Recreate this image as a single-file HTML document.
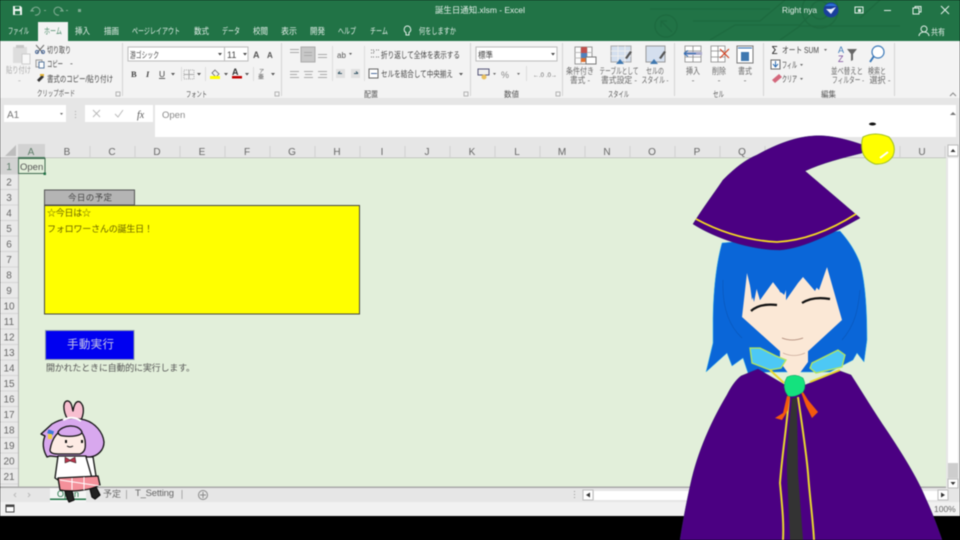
<!DOCTYPE html>
<html lang="ja">
<head>
<meta charset="utf-8">
<title>誕生日通知.xlsm - Excel</title>
<style>
html,body{margin:0;padding:0;background:#000;width:960px;height:540px;overflow:hidden}
svg{display:block;position:absolute;left:0;top:0;filter:blur(.4px)}
text{font-family:"Liberation Sans","Noto Sans CJK JP",sans-serif;fill:#444;font-size:8.5px}
.w{fill:#e4efe9}
.r{fill:#555;font-size:8px}
.c{fill:#666;font-size:10px;text-anchor:middle;font-family:"Liberation Sans",sans-serif}
.n{fill:#666;font-size:10px;text-anchor:middle;font-family:"Liberation Sans",sans-serif}
.g{fill:#666;font-size:8.5px;text-anchor:middle}
</style>
</head>
<body>
<svg width="960" height="540" viewBox="0 0 960 540" xmlns="http://www.w3.org/2000/svg">
<rect width="960" height="540" fill="#000"/>
<!-- title bar -->
<rect width="960" height="41" fill="#217346"/>
<g fill="none" stroke="#1d6a3f" stroke-width="1.300">
<path d="M650 9H770M780 9H800"/>
<circle cx="666" cy="26" r="11"/><path d="M672 32L661 21M661 27V21H667"/>
<path d="M693 21H760L785 0M710 40L735 25H800L815 10"/>
<circle cx="820" cy="10" r="18"/><circle cx="820" cy="10" r="9"/>
<path d="M780 40L800 26H900M880 0L860 18"/>
</g>
<path d="M13 6H20.500L22 7.500V15H13Z" fill="#f0f5f1"/><rect x="15" y="6.500" width="4.500" height="2.500" fill="#217346"/><rect x="15" y="11" width="5" height="3.500" fill="#217346"/>
<g fill="none" stroke="#7eab91" stroke-width="1.100"><path d="M33 8l-2 3h3M32 11a4 4 0 1 1 3 4"/><path d="M61 8l2 3h-3M62 11a4 4 0 1 0-3 4"/></g>
<g fill="#7eab91"><rect x="44" y="10" width="2" height="1"/><rect x="66" y="10" width="2" height="1"/><rect x="78" y="9" width="3" height="3"/></g>
<text class="w" x="435" y="13" textLength="90" lengthAdjust="spacingAndGlyphs">誕生日通知.xlsm  -  Excel</text>
<text class="w" x="782" y="13" textLength="35" lengthAdjust="spacingAndGlyphs">Right nya</text>
<circle cx="831" cy="10" r="7.500" fill="#1a3f9c"/><path d="M826 9l5 5 5-7-5 2z" fill="#e8f0ff"/><path d="M825 6a7 5 0 0 1 12 0z" fill="#2a72d8"/>
<rect x="855" y="7" width="8" height="6" fill="none" stroke="#e4efe9"/><rect x="858" y="9" width="3" height="3" fill="#e4efe9"/>
<rect x="884" y="10" width="7" height="1" fill="#e4efe9"/>
<rect x="913" y="8" width="6" height="6" fill="none" stroke="#e4efe9"/><path d="M915 8V6.500H921V12H919" fill="none" stroke="#e4efe9"/>
<path d="M941 6l8 8M949 6l-8 8" stroke="#e4efe9"/>
<text class="w" x="8" y="34" textLength="21" lengthAdjust="spacingAndGlyphs">ファイル</text>
<path d="M38 41V22H68V41z" fill="#f3f3f3"/>
<text x="44" y="34" style="fill:#4a8a68" textLength="18" lengthAdjust="spacingAndGlyphs">ホーム</text>
<text class="w" x="75" y="34" textLength="15" lengthAdjust="spacingAndGlyphs">挿入</text>
<text class="w" x="104" y="34" textLength="15" lengthAdjust="spacingAndGlyphs">描画</text>
<text class="w" x="132" y="34" textLength="48" lengthAdjust="spacingAndGlyphs">ページレイアウト</text>
<text class="w" x="194" y="34" textLength="15" lengthAdjust="spacingAndGlyphs">数式</text>
<text class="w" x="222" y="34" textLength="18" lengthAdjust="spacingAndGlyphs">データ</text>
<text class="w" x="253" y="34" textLength="15" lengthAdjust="spacingAndGlyphs">校閲</text>
<text class="w" x="281" y="34" textLength="16" lengthAdjust="spacingAndGlyphs">表示</text>
<text class="w" x="310" y="34" textLength="15" lengthAdjust="spacingAndGlyphs">開発</text>
<text class="w" x="338" y="34" textLength="18" lengthAdjust="spacingAndGlyphs">ヘルプ</text>
<text class="w" x="370" y="34" textLength="18" lengthAdjust="spacingAndGlyphs">チーム</text>
<path d="M407 26a3.500 3.500 0 0 1 2 6.500V35h-3v-2.500a3.500 3.500 0 0 1 1-6.500z" fill="none" stroke="#e4efe9"/>
<text class="w" x="419" y="34" textLength="37" lengthAdjust="spacingAndGlyphs">何をしますか</text>
<circle cx="924" cy="29" r="3" fill="none" stroke="#e4efe9"/><path d="M919 36a5 4 0 0 1 10 0" fill="none" stroke="#e4efe9"/>
<text class="w" x="931" y="35" textLength="14" lengthAdjust="spacingAndGlyphs">共有</text>

<!-- ribbon -->
<rect y="41" width="960" height="57" fill="#f3f3f3"/>
<rect y="98" width="960" height="46" fill="#e6e6e6"/>
<g fill="#d4d4d4"><rect x="122" y="43" width="1" height="53"/><rect x="281" y="43" width="1" height="53"/><rect x="470" y="43" width="1" height="53"/><rect x="562" y="43" width="1" height="53"/><rect x="674" y="43" width="1" height="53"/><rect x="763" y="43" width="1" height="53"/><rect x="894" y="43" width="1" height="53"/></g>
<!-- clipboard -->
<rect x="13" y="47" width="14" height="16" fill="#ddd"/><rect x="16" y="45" width="8" height="3" fill="#c8c8c8"/><rect x="22" y="54" width="8" height="10" fill="#f8f8f8" stroke="#ccc"/>
<text x="6" y="73" style="fill:#aaa" textLength="25" lengthAdjust="spacingAndGlyphs">貼り付け</text>
<text x="18" y="83" style="fill:#aaa">-</text>
<path d="M36 45l7 8M44 45l-7 8" stroke="#6f6f6f" fill="none"/><circle cx="37" cy="52" r="1.500" fill="none" stroke="#4a6a9a"/><circle cx="43" cy="52" r="1.500" fill="none" stroke="#4a6a9a"/>
<text x="47" y="53" textLength="24" lengthAdjust="spacingAndGlyphs">切り取り</text>
<rect x="36" y="60" width="6" height="7" fill="#eee" stroke="#999"/><rect x="39" y="62" width="5" height="6" fill="#fff" stroke="#5a7aa0"/>
<text x="47" y="67" textLength="16" lengthAdjust="spacingAndGlyphs">コピー</text><text x="70" y="66">-</text>
<path d="M37 80l5-5 2 2-5 5z" fill="#333"/><rect x="40" y="74" width="4" height="2" fill="#e0b030"/>
<text x="47" y="82" textLength="66" lengthAdjust="spacingAndGlyphs">書式のコピー/貼り付け</text>
<text x="37" y="96" class="r" textLength="38" lengthAdjust="spacingAndGlyphs">クリップボード</text>
<rect x="116" y="92" width="4" height="4" fill="none" stroke="#999" stroke-width=".7"/>
<!-- font -->
<rect x="128" y="47" width="120" height="14" fill="#fff" stroke="#bbb"/><rect x="224" y="47" width="1" height="14" fill="#bbb"/>
<text x="130" y="58" textLength="29" lengthAdjust="spacingAndGlyphs">游ゴシック</text>
<path d="M218 53h4l-2 2.500z M243 53h4l-2 2.500z" fill="#444"/>
<text x="227" y="58" style="font-size:9px">11</text>
<text x="253" y="58" style="font-size:9px;font-weight:bold;fill:#555">A</text><text x="267" y="58" style="font-size:8px;font-weight:bold;fill:#555">A</text>
<text x="131" y="77" style="font-size:8.500px;font-weight:bold;font-family:'Liberation Serif',serif">B</text>
<text x="146" y="77" style="font-size:8.500px;font-style:italic;font-family:'Liberation Serif',serif;font-weight:bold">I</text>
<text x="159" y="77" style="font-size:8.500px;text-decoration:underline">U</text><path d="M171 73h4l-2 2.500z M197 73h4l-2 2.500z M224 73h4l-2 2.500z M245 73h4l-2 2.500z M271 73h4l-2 2.500z" fill="#555"/>
<rect x="181" y="67" width="1" height="14" fill="#ddd"/><rect x="205" y="67" width="1" height="14" fill="#ddd"/><rect x="253" y="67" width="1" height="14" fill="#ddd"/>
<rect x="184" y="70" width="10" height="9" fill="none" stroke="#aaa" stroke-dasharray="1 1"/><path d="M189 70v9M184 74.500h10" stroke="#aaa"/>
<path d="M215 70l4 4-3 3-4-4z" fill="#f0f0f0" stroke="#666" stroke-width=".8"/><rect x="210" y="76" width="10" height="3" fill="#ffff00"/>
<text x="232" y="75" style="font-size:9px;font-weight:bold;fill:#333">A</text><rect x="232" y="76" width="10" height="2.500" fill="#c00000"/>
<text x="259" y="73" style="font-size:5px">ア</text><text x="258" y="79" style="font-size:6px">亜</text>
<text x="186" y="97" class="r" textLength="21" lengthAdjust="spacingAndGlyphs">フォント</text>
<rect x="275" y="92" width="4" height="4" fill="none" stroke="#999" stroke-width=".7"/>
<!-- align -->
<rect x="301" y="47" width="14" height="15" fill="#c8c8c8" stroke="#aaa"/>
<g fill="#aaa"><rect x="290" y="49" width="9" height="1"/><rect x="290" y="52" width="9" height="1"/><rect x="304" y="52" width="8" height="1"/><rect x="304" y="55" width="8" height="1"/><rect x="318" y="54" width="9" height="1"/><rect x="318" y="57" width="9" height="1"/>
<rect x="290" y="71" width="9" height="1"/><rect x="290" y="74" width="7" height="1"/><rect x="290" y="77" width="9" height="1"/><rect x="304" y="71" width="9" height="1"/><rect x="305" y="74" width="7" height="1"/><rect x="304" y="77" width="9" height="1"/><rect x="318" y="71" width="9" height="1"/><rect x="320" y="74" width="7" height="1"/><rect x="318" y="77" width="9" height="1"/></g>
<rect x="332" y="46" width="1" height="35" fill="#ddd"/>
<text x="337" y="58" style="font-size:8px;fill:#555">ab</text><path d="M349 53h3l-1.500 2z" fill="#555"/>
<rect x="336" y="69" width="9" height="9" fill="#e0e0e0"/><rect x="351" y="69" width="9" height="9" fill="#e0e0e0"/><path d="M342 73.500h-4M338 73.500l2-2M358 73.500h-4M358 73.500l-2-2" stroke="#356" fill="none"/>
<rect x="364" y="46" width="1" height="35" fill="#ddd"/>
<path d="M371 50h3v3h-3M376 50h3M371 57h3M376 57h3" stroke="#777" fill="none" stroke-dasharray="1 1"/>
<text x="381" y="58" textLength="79" lengthAdjust="spacingAndGlyphs">折り返して全体を表示する</text>
<rect x="369" y="69" width="9" height="9" fill="#fff" stroke="#666"/><rect x="371" y="73" width="6" height="1" fill="#4a6a9a"/>
<text x="381" y="77" textLength="72" lengthAdjust="spacingAndGlyphs">セルを結合して中央揃え</text><path d="M459 73h4l-2 2.500z" fill="#555"/>
<text x="364" y="97" class="r" textLength="14" lengthAdjust="spacingAndGlyphs">配置</text>
<rect x="464" y="92" width="4" height="4" fill="none" stroke="#999" stroke-width=".7"/>
<!-- number -->
<rect x="476" y="47" width="81" height="14" fill="#fff" stroke="#bbb"/><text x="478" y="58" textLength="15" lengthAdjust="spacingAndGlyphs">標準</text><path d="M551 53h4l-2 2.500z" fill="#444"/>
<rect x="478" y="69" width="11" height="6" fill="#eee" stroke="#557"/><circle cx="484" cy="77" r="2.500" fill="#e8c060"/><path d="M493 73h3l-1.500 2z M517 73h3l-1.500 2z" fill="#666"/>
<text x="501" y="78" style="font-size:9px;fill:#888">%</text>
<rect x="526" y="66" width="1" height="15" fill="#ddd"/>
<text x="533" y="77" style="font-size:6px;fill:#666">←.0</text><text x="546" y="77" style="font-size:6px;fill:#666">.0→</text>
<text x="504" y="97" class="r" textLength="15" lengthAdjust="spacingAndGlyphs">数値</text>
<rect x="556" y="92" width="4" height="4" fill="none" stroke="#999" stroke-width=".7"/>
<!-- styles -->
<rect x="575" y="47" width="17" height="17" fill="#fbfbfb" stroke="#999"/><path d="M581 47v17M587 47v17M575 52.500h17M575 58h17" stroke="#bbb"/><rect x="581" y="47" width="6" height="6" fill="#c0504d"/><rect x="581" y="53" width="6" height="5" fill="#4f81bd"/><rect x="581" y="58" width="6" height="4" fill="#e07030"/>
<rect x="586" y="57" width="10" height="7" fill="#fff" stroke="#777"/>
<rect x="611" y="46" width="20" height="16" fill="#d4dfee" stroke="#aaa"/><path d="M618 46v16M625 46v16M611 51h20M611 56h20" stroke="#eee"/><path d="M632 52l-5 7-2-1 5-7z" fill="#555"/><path d="M616 64l4-5 4 5z" fill="#3f78b0"/>
<text class="g" x="580" y="74" textLength="28" lengthAdjust="spacingAndGlyphs">条件付き</text>
<text class="g" x="580" y="83" textLength="20" lengthAdjust="spacingAndGlyphs">書式 -</text>
<text class="g" x="619" y="74" textLength="39" lengthAdjust="spacingAndGlyphs">テーブルとして</text>
<text class="g" x="619" y="83" textLength="36" lengthAdjust="spacingAndGlyphs">書式設定 -</text>
<rect x="646" y="46" width="19" height="16" fill="#d4dfee" stroke="#999"/><path d="M666 52l-5 7-2-1 5-7z" fill="#555"/><path d="M650 64l4-5 4 5z" fill="#3f78b0"/>
<text class="g" x="655" y="74" textLength="18" lengthAdjust="spacingAndGlyphs">セルの</text>
<text class="g" x="655" y="83" textLength="27" lengthAdjust="spacingAndGlyphs">スタイル -</text>
<text x="608" y="97" class="r" textLength="21" lengthAdjust="spacingAndGlyphs">スタイル</text>
<!-- cells -->
<path d="M685 46h16v16h-16zM685 51h16M685 57h16M693 46v16" fill="#fff" stroke="#888" stroke-width=".8"/><path d="M684 52h18v3h-18z" fill="#aac"/><path d="M684 53.500h12m-12 0l4-3m-4 3l4 3" stroke="#2a6ab0" fill="none"/>
<path d="M711 46h14v16h-14zM711 51h14M711 57h14M718 46v16" fill="#fff" stroke="#888" stroke-width=".8"/><path d="M720 49l9 9M729 49l-9 9" stroke="#d04020" stroke-width="1.200"/>
<rect x="737" y="46" width="16" height="17" fill="#fff" stroke="#777"/><rect x="741" y="52" width="8" height="9" fill="#3f78b0"/><path d="M738 48h14" stroke="#2a6ab0"/>
<text class="g" x="693" y="74" textLength="14" lengthAdjust="spacingAndGlyphs">挿入</text><text class="g" x="693" y="83">-</text>
<text class="g" x="719" y="74" textLength="14" lengthAdjust="spacingAndGlyphs">削除</text><text class="g" x="719" y="83">-</text>
<text class="g" x="745" y="74" textLength="14" lengthAdjust="spacingAndGlyphs">書式</text><text class="g" x="745" y="83">-</text>
<text x="713" y="97" class="r" textLength="11" lengthAdjust="spacingAndGlyphs">セル</text>
<!-- edit -->
<text x="771" y="54" style="font-size:11px;fill:#333;font-family:'DejaVu Sans',sans-serif">Σ</text>
<text x="782" y="53" textLength="37" lengthAdjust="spacingAndGlyphs">オート SUM</text><path d="M824 49h3l-1.500 2z" fill="#666"/>
<rect x="771" y="60" width="9" height="9" fill="#fff" stroke="#666"/><path d="M775.500 61v5M773 64l2.500 3 2.500-3" stroke="#2a6ab0" fill="none"/>
<text x="782" y="68" textLength="15" lengthAdjust="spacingAndGlyphs">フィル</text><path d="M800 64h3l-1.500 2z" fill="#666"/>
<path d="M772 80l7-6 3 3-7 6z" fill="#d4687c"/>
<text x="782" y="82" textLength="15" lengthAdjust="spacingAndGlyphs">クリア</text><path d="M800 78h3l-1.500 2z" fill="#666"/>
<text x="838" y="53" style="font-size:9px;fill:#3a78b8">A</text><text x="838" y="62" style="font-size:9px;fill:#7a4a9a">Z</text>
<path d="M847 49h10l-4 5v6l-2 1v-7z" fill="#666"/>
<circle cx="878" cy="52" r="6" fill="#fff" stroke="#3a78b8" stroke-width="1.200"/><path d="M874 56l-4 6" stroke="#3a78b8" stroke-width="2"/>
<text class="g" x="847" y="74" textLength="32" lengthAdjust="spacingAndGlyphs">並べ替えと</text><text class="g" x="848" y="83" textLength="32" lengthAdjust="spacingAndGlyphs">フィルター -</text>
<text class="g" x="877" y="74" textLength="18" lengthAdjust="spacingAndGlyphs">検索と</text><text class="g" x="880" y="83" textLength="21" lengthAdjust="spacingAndGlyphs">選択 -</text>
<text x="821" y="97" class="r" textLength="15" lengthAdjust="spacingAndGlyphs">編集</text>
<path d="M950 96l3-3 3 3" fill="none" stroke="#888"/>

<!-- formula bar -->
<rect x="4" y="105" width="62" height="17" fill="#fff"/>
<text x="7" y="118" style="font-size:10px;fill:#777;font-family:'Liberation Sans',sans-serif">A1</text>
<path d="M60 113h3l-1.500 2z" fill="#666"/>
<g fill="#aaa"><rect x="75" y="111" width="1" height="1"/><rect x="75" y="114" width="1" height="1"/><rect x="75" y="117" width="1" height="1"/></g>
<rect x="85" y="105" width="68" height="17" fill="#fff"/>
<path d="M93 110l7 7M100 110l-7 7" stroke="#bbb"/>
<path d="M115 114l3 3 5-7" stroke="#bbb" fill="none"/>
<text x="137" y="118" style="font-size:10px;font-style:italic;fill:#555;font-family:'Liberation Serif',serif">fx</text>
<rect x="155" y="105" width="801" height="32" fill="#fff"/>
<text x="162" y="118" style="font-size:9.500px;fill:#888;font-family:'Liberation Sans',sans-serif">Open</text>
<path d="M950 115l3-3 3 3z" fill="#777"/>

<!-- column headers -->
<rect y="144" width="960" height="14" fill="#e6e6e6"/>
<rect y="157.500" width="946" height="1" fill="#a8a8a8"/>
<rect x="18" y="144" width="27" height="14" fill="#d2d2d2"/>
<rect x="18" y="157" width="27" height="1.500" fill="#4a8060"/>
<path d="M16 145v11H5z" fill="#bdbdbd"/>
<g fill="#cfcfcf"><rect x="89.500" y="146" width="1" height="11"/><rect x="134.500" y="146" width="1" height="11"/><rect x="179.500" y="146" width="1" height="11"/><rect x="224.500" y="146" width="1" height="11"/><rect x="269.500" y="146" width="1" height="11"/><rect x="314.500" y="146" width="1" height="11"/><rect x="359.500" y="146" width="1" height="11"/><rect x="404.500" y="146" width="1" height="11"/><rect x="449.500" y="146" width="1" height="11"/><rect x="494.500" y="146" width="1" height="11"/><rect x="539.500" y="146" width="1" height="11"/><rect x="584.500" y="146" width="1" height="11"/><rect x="629.500" y="146" width="1" height="11"/><rect x="674.500" y="146" width="1" height="11"/><rect x="719.500" y="146" width="1" height="11"/><rect x="764.500" y="146" width="1" height="11"/><rect x="899.500" y="146" width="1" height="11"/><rect x="944.500" y="146" width="1" height="11"/></g>
<text class="c" x="31" y="155" style="fill:#5c7c68">A</text><text class="c" x="67" y="155">B</text><text class="c" x="112" y="155">C</text><text class="c" x="157" y="155">D</text><text class="c" x="202" y="155">E</text><text class="c" x="247" y="155">F</text><text class="c" x="292" y="155">G</text><text class="c" x="337" y="155">H</text><text class="c" x="382" y="155">I</text><text class="c" x="427" y="155">J</text><text class="c" x="472" y="155">K</text><text class="c" x="517" y="155">L</text><text class="c" x="562" y="155">M</text><text class="c" x="607" y="155">N</text><text class="c" x="652" y="155">O</text><text class="c" x="697" y="155">P</text><text class="c" x="742" y="155">Q</text><text class="c" x="922" y="155">U</text>

<!-- sheet -->
<rect x="18" y="158" width="928" height="329" fill="#e2efda"/>
<!-- row headers -->
<rect y="158" width="18" height="329" fill="#e9e9e9"/>
<rect y="158" width="18" height="16" fill="#d2d2d2"/>
<rect x="18" y="158" width="1" height="329" fill="#b0b0b0"/>
<g fill="#d4d4d4"><rect y="173.500" width="18" height="1"/><rect y="189" width="18" height="1"/><rect y="204.500" width="18" height="1"/><rect y="220" width="18" height="1"/><rect y="235.500" width="18" height="1"/><rect y="251" width="18" height="1"/><rect y="266.500" width="18" height="1"/><rect y="282" width="18" height="1"/><rect y="297.500" width="18" height="1"/><rect y="313" width="18" height="1"/><rect y="328.500" width="18" height="1"/><rect y="344" width="18" height="1"/><rect y="359.500" width="18" height="1"/><rect y="375" width="18" height="1"/><rect y="390.500" width="18" height="1"/><rect y="406" width="18" height="1"/><rect y="421.500" width="18" height="1"/><rect y="437" width="18" height="1"/><rect y="452.500" width="18" height="1"/><rect y="468" width="18" height="1"/><rect y="483.500" width="18" height="1"/></g>
<g>
<text class="n" x="9" y="170" style="fill:#5c7c68">1</text><text class="n" x="9" y="185.500">2</text><text class="n" x="9" y="201">3</text><text class="n" x="9" y="216.500">4</text><text class="n" x="9" y="232">5</text><text class="n" x="9" y="247.500">6</text><text class="n" x="9" y="263">7</text><text class="n" x="9" y="278.500">8</text><text class="n" x="9" y="294">9</text><text class="n" x="9" y="309.500">10</text><text class="n" x="9" y="325">11</text><text class="n" x="9" y="340.500">12</text><text class="n" x="9" y="356">13</text><text class="n" x="9" y="371.500">14</text><text class="n" x="9" y="387">15</text><text class="n" x="9" y="402.500">16</text><text class="n" x="9" y="418">17</text><text class="n" x="9" y="433.500">18</text><text class="n" x="9" y="449">19</text><text class="n" x="9" y="464.500">20</text><text class="n" x="9" y="480">21</text>
</g>
<!-- A1 -->
<rect x="18.500" y="158.500" width="26.500" height="15" fill="none" stroke="#3f6a50" stroke-width="1"/>
<rect x="43.500" y="172.500" width="2.500" height="2.500" fill="#217346"/>
<text x="20" y="170" style="font-size:9.500px;fill:#555;font-family:'Liberation Sans',sans-serif">Open</text>
<!-- schedule -->
<rect x="44.500" y="190" width="90" height="15" fill="#b4b4b4" stroke="#555"/>
<text x="68" y="200.500" style="fill:#444;font-size:8.500px" textLength="44">今日の予定</text>
<rect x="44.500" y="205.500" width="315" height="108.500" fill="#ffff00" stroke="#444"/>
<text x="47" y="216" style="font-size:9px;fill:#665f00" textLength="44">☆今日は☆</text>
<text x="47" y="232" style="font-size:9px;fill:#665f00" textLength="106">フォロワーさんの誕生日！</text>
<!-- button -->
<rect x="45.500" y="330.500" width="88.500" height="29" fill="#0000f0" stroke="#8a97a8"/>
<text x="67" y="348" style="font-size:11.500px;fill:#c8c8e8" textLength="47">手動実行</text>
<text x="46" y="371" style="font-size:9px;fill:#555" textLength="149">開かれたときに自動的に実行します。</text>

<!-- sheet tabs -->
<rect y="487" width="946" height="15" fill="#e6e6e6"/>
<rect y="486.500" width="946" height="1.500" fill="#a8a8a8"/>
<rect x="50" y="488" width="36" height="14" fill="#f5f5f5"/>
<rect x="50" y="498.500" width="36" height="1.500" fill="#217346"/>
<text x="57" y="497" style="font-size:9px;fill:#217346;font-family:'Liberation Sans',sans-serif">Open</text>
<text x="103" y="497" style="font-size:9px;fill:#666" textLength="18">予定</text>
<text x="135" y="496" style="font-size:9.500px;fill:#666;font-family:'Liberation Sans',sans-serif" textLength="39">T_Setting</text>
<rect x="126" y="490" width="1" height="9" fill="#aaa"/><rect x="181.500" y="490" width="1" height="9" fill="#aaa"/>
<circle cx="203" cy="495" r="4.500" fill="none" stroke="#888"/><path d="M200 495h6M203 492v6" stroke="#888"/>
<path d="M16 493l-2 2 2 2M28 493l2 2-2 2" fill="none" stroke="#bbb"/>
<!-- h scrollbar -->
<g fill="#999"><rect x="574" y="491" width="1" height="1"/><rect x="574" y="494" width="1" height="1"/><rect x="574" y="497" width="1" height="1"/></g>
<rect x="583" y="490" width="10" height="10" fill="#fff" stroke="#bbb"/><path d="M590 492.500v5l-4-2.500z" fill="#333"/>
<rect x="594" y="491" width="352" height="9" fill="#fff"/>
<rect x="946" y="487" width="14" height="15" fill="#e6e6e6"/>
<rect x="938" y="490" width="10" height="10" fill="#fff" stroke="#bbb"/><path d="M941 492.500v5l4-2.500z" fill="#333"/>
<!-- v scrollbar -->
<rect x="946" y="144" width="14" height="343" fill="#e6e6e6"/>
<rect x="948" y="145" width="10" height="11" fill="#fff" stroke="#bbb"/><path d="M950.500 152l2.500-3 2.500 3z" fill="#333"/>
<rect x="948" y="158" width="10" height="305" fill="#fff"/>
<rect x="948" y="463" width="10" height="15" fill="#cdcdcd"/>
<rect x="948" y="479" width="10" height="9" fill="#fff" stroke="#bbb"/><path d="M950.500 482l2.500 3 2.500-3z" fill="#333"/>
<!-- status -->
<rect y="502" width="960" height="14" fill="#f1f1f1"/>
<rect x="6" y="505" width="8" height="7" fill="#fff" stroke="#444"/><rect x="6" y="505" width="8" height="2" fill="#444"/>
<text x="934" y="512" style="font-size:8.500px;fill:#666;font-family:'Liberation Sans',sans-serif">100%</text>

<!-- big character -->
<ellipse cx="872.500" cy="124" rx="3.500" ry="1.500" fill="#111"/>
<!-- hair back -->
<path d="M722 243C715 268 713 300 713 322L713 343L706 372L727 353L732 366L743 358L748 373L770 372L830 372L853 360L857 353L864 362L867 340C867 315 866 285 860 263C855 250 848 240 840 231Z" fill="#0a66d8" stroke="#39b5e8" stroke-width=".5"/>
<path d="M723 280C722 305 728 325 742 338M860 290C858 310 855 325 842 340" fill="none" stroke="#0a55b5" stroke-width=".6"/>
<!-- neck -->
<path d="M780 345H808V362L794 381L780 362Z" fill="#fbe8d6"/>
<!-- cape -->
<path d="M680 540C683 520 688 495 692 478C700 445 715 415 727 395C732 385 737 379 741 376L758 369L785 385H805L840 371L851 375C862 392 874 412 887 431C905 458 918 480 925 497C932 512 938 528 942 540Z" fill="#4b0082" stroke="#3a1a70" stroke-width=".5"/>
<!-- collar -->
<path d="M750 348L752 363L770 370L781 368L786 360L776 356L760 348Z" fill="#4dc8f5" stroke="#b4e65a" stroke-width="1.300"/>
<path d="M845 355L842 367L816 373L810 368L812 363L838 350Z" fill="#4dc8f5" stroke="#b4e65a" stroke-width="1.300"/>
<!-- face -->
<path d="M747 273L742 317L782 353Q793 358 804 355L842 320L827 267L819 290L808 279L802 276L797 283L786 300L786 290L780 291L773 282L760 300L757 287L754 302Z" fill="#fbe8d6"/>
<path d="M756 287L760 300L773 282L779 290L783 298L786 290L786 300L798 283L803 277L815 291L827 267L818 240L752 242L748 270L752 300Z" fill="#0a66d8"/>
<path d="M780 292q5 2 5 6q0 3-2 5q-2-4-3-11z" fill="#fbe8d6"/>
<!-- eyes -->
<path d="M751 311Q760 303 777 305" fill="none" stroke="#111" stroke-width="2.200"/>
<path d="M802 303Q813 296 830 299" fill="none" stroke="#111" stroke-width="2.200"/>
<path d="M782 338Q792 342 803 338" fill="none" stroke="#a78070" stroke-width=".8"/>
<path d="M783 353Q794 358 805 353" fill="none" stroke="#b59080" stroke-width=".6"/>
<!-- center strip and cords -->
<path d="M792 398L797 398C797 420 798 450 798 473L803 540H790L787 473C786 450 790 420 792 398Z" fill="#333"/>
<path d="M789 397C787 425 782 455 780 483C782 505 784 522 783 540" fill="none" stroke="#e8d830" stroke-width="2"/>
<path d="M798 397C802 425 806 450 808 473C810 500 813 520 814 540" fill="none" stroke="#e8d830" stroke-width="2"/>
<path d="M770 370L784 383M810 382L840 370" stroke="#e8d830" stroke-width="2"/>
<path d="M787 396L783 413L775 418L782 420L788 410L790 396Z" fill="#f4590e"/>
<path d="M801 392L806 406L812 418L818 412L808 400L803 392Z" fill="#f4590e"/>
<path d="M787 377Q795 373 803 378Q807 386 803 392Q795 398 788 396Q781 387 787 377Z" fill="#14e27e" stroke="#0f9a60" stroke-width=".5"/>
<!-- hat -->
<path d="M693 224C705 205 715 192 723 180C735 168 745 160 757 155C775 145 795 137 813 136C825 135 840 137 863 145L862 153C842 158 822 163 805 171C825 188 845 205 860 218C835 232 805 248 780 250C750 250 715 238 693 224Z" fill="#4b0082" stroke="#3a1a70" stroke-width=".5"/>
<path d="M696 219Q735 240 777 242Q815 240 856 214" fill="none" stroke="#f5d923" stroke-width="1.800"/>
<path d="M863 137Q875 131 889 137Q897 146 893 156Q887 165 875 164Q864 160 862 150Q861 142 863 137Z" fill="#ffff00" stroke="#9fbf20" stroke-width="1"/>
<path d="M880 158L888 152" stroke="#fff" stroke-width="2"/>

<!-- mini character -->
<g stroke="#111" stroke-width="1.300" stroke-linejoin="round">
<path d="M68 420C62 410 63 400 68 401C72 402 72 408 73 411C74 405 76 400 80 402C85 406 84 415 80 422Z" fill="#f8bfd0"/>
<path d="M41 434L52 424C62 418 72 417 85 420C95 423 103 432 104 442C104 450 98 456 90 457H60L50 456L47 457C43 450 42 443 45 436Z" fill="#d8a8ee"/>
<path d="M50 450C52 438 58 430 68 428C76 427 83 430 85 440C86 448 85 452 80 454H58C52 454 50 452 50 450Z" fill="#fdebe4"/>
<path d="M58 432C62 425 78 423 82 432C82 436 70 437 64 436C60 436 58 434 58 432Z" fill="#d8a8ee"/>
<path d="M58 456H86L92 470L92 480H58L55 478Z" fill="#fff"/>
<path d="M86 457L93 457L96 476L92 478Z" fill="#fff"/>
<path d="M58 478L98 476L100 485C90 491 70 492 60 490Z" fill="#f4909a"/>
<path d="M65 491L72 491L74 500L69 502L67 498Z" fill="#222"/>
<path d="M90 489L96 487L100 495L95 499L92 497Z" fill="#222"/>
</g>
<path d="M65 457l5 3 5-3 1 6-6-2-5 2z" fill="#b8344a" stroke="#111" stroke-width=".5"/>
<path d="M60 480l40 6M72 478v12M84 477v13" stroke="#fff" stroke-width="1"/>
<rect x="48" y="430" width="6" height="4" fill="#3a78d8" transform="rotate(20 50 431)"/><rect x="48" y="434" width="4" height="5" fill="#f0d040"/>
<rect x="65" y="440" width="2" height="3" fill="#111"/><rect x="81" y="440" width="2" height="3" fill="#111"/><path d="M67 446q3 2 6 0" stroke="#111" fill="none"/>
<path d="M63 420q10 -5 18 1" stroke="#fff" stroke-width="2" fill="none"/>
</svg>
</body>
</html>
